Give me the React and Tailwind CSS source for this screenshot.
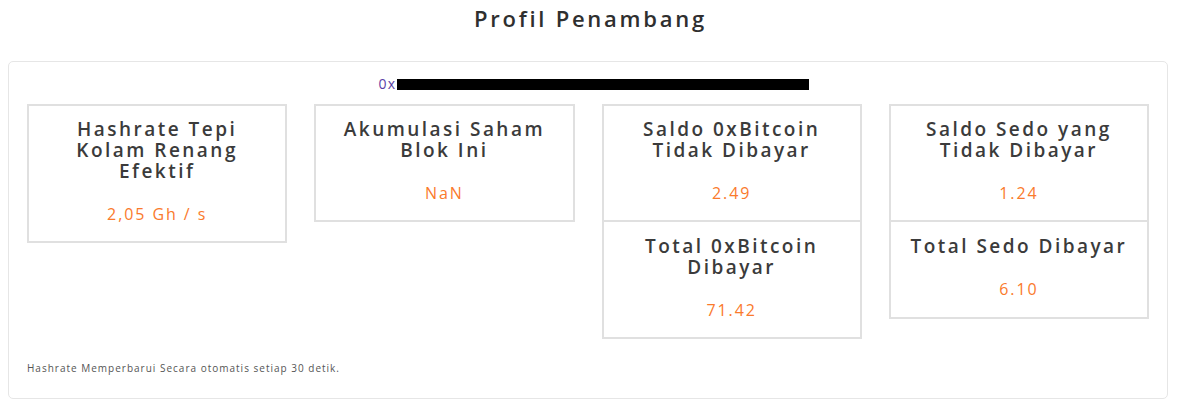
import React from 'react';

const Stat = ({ title, value, className = '' }) => (
  <div className={`border-2 border-[#e0e0e0] bg-white px-2 pt-[13px] pb-[17px] text-center ${className}`}>
    <h3 className="text-[19px] font-semibold leading-[21px] tracking-[0.13em] text-[#3b3b3b]">{title}</h3>
    <div className="mt-[22px] text-[16px] leading-[20px] tracking-[0.12em] text-[#fa7a2c]">{value}</div>
  </div>
);

const App = () => {
  return (
    <div className="min-h-[402px] bg-white font-['Open_Sans','Noto_Sans',sans-serif]">
      <h1 className="pt-[4px] text-center text-[22px] font-semibold leading-[28px] tracking-[0.125em] text-[#2f2f2f]">
        Profil Penambang
      </h1>

      <div className="ml-2 mt-[29px] w-[1160px] h-[338px] rounded-[5px] border border-[#e6e6e6] px-[18px] pt-[12px]">
        <div className="flex items-center justify-center pl-[11px] text-[14px] leading-[20px]">
          <span className="tracking-[0.1em] text-[#5b3fa6]">0x</span>
          <span className="block h-[11px] w-[412px] bg-black" />
        </div>

        <div className="mt-[10px] grid grid-cols-4 items-start gap-[27px]">
          <Stat title={<>Hashrate Tepi<br />Kolam Renang<br />Efektif</>} value="2,05 Gh / s" />
          <Stat title={<>Akumulasi Saham<br />Blok Ini</>} value="NaN" />
          <div className="flex flex-col">
            <Stat title={<>Saldo 0xBitcoin<br />Tidak Dibayar</>} value="2.49" />
            <Stat title={<>Total 0xBitcoin<br />Dibayar</>} value="71.42" className="border-t-0 !pt-[14px] !pb-[17px]" />
          </div>
          <div className="flex flex-col">
            <Stat title={<>Saldo Sedo yang<br />Tidak Dibayar</>} value="1.24" />
            <Stat title="Total Sedo Dibayar" value="6.10" className="border-t-0 !pt-[14px] !pb-[18px]" />
          </div>
        </div>

        <p className="mt-[22px] text-[10px] leading-[14px] tracking-[0.1em] text-[#555]">
          Hashrate Memperbarui Secara otomatis setiap 30 detik.
        </p>
      </div>
    </div>
  );
};

export default App;
